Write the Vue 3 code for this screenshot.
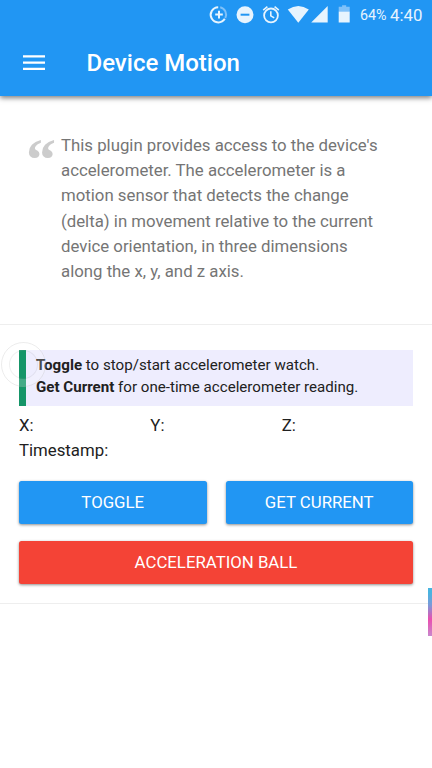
<script setup>
const axes = ['X', 'Y', 'Z']
</script>

<template>
  <div class="screen">
    <header class="top">
      <div class="status">
        <svg class="status-icons" width="156" height="30" viewBox="0 0 156 30">
          <g fill="none" stroke="#e7f4fe" stroke-width="2">
            <path d="M18.2 7.2A7.6 7.6 0 1 0 24.8 18.8" />
            <path d="M20.2 7.2A7.6 7.6 0 0 1 25.3 18" stroke="#7fc1f9" />
            <path d="M15.2 14.6h7.6M19 10.8v7.6" />
            <circle cx="71" cy="15.4" r="6.9" stroke-width="1.8" />
            <path d="M63.2 10.2l4.2-3.6M78.8 10.2l-4.2-3.6M70.8 11.3v4.6l3.4 2" stroke-width="1.6" />
          </g>
          <circle cx="45" cy="14.7" r="8.5" fill="#e7f4fe" />
          <path d="M40.6 14.7h8.8" stroke="#2196f3" stroke-width="2" />
          <path d="M87.8 9.4Q98.3 2.4 108.8 9.4L98.3 22.7Z" fill="#e7f4fe" />
          <path d="M127.7 6V22.5H111.2Z" fill="#e7f4fe" />
          <path d="M138.7 12V6.8h3.4V5.3h4.1v1.5h3.5V12Z" fill="#7fc1f9" />
          <path d="M138.7 11.7h11v10.8h-11Z" fill="#e7f4fe" />
        </svg>
        <span class="battery">64%</span>
        <span class="clock">4:40</span>
      </div>
      <div class="navbar">
        <svg class="menu" width="22" height="16" viewBox="0 0 22 16">
          <path d="M0 1.3h22M0 7.6h22M0 13.8h22" stroke="#fff" stroke-width="2.3" />
        </svg>
        <h1>Device Motion</h1>
      </div>
    </header>

    <section class="about">
      <span class="quote">“</span>
      <p>
        This plugin provides access to the device's<br>accelerometer. The accelerometer is a<br>motion
        sensor that detects the change<br>(delta) in movement relative to the current<br>device
        orientation, in three dimensions<br>along the x, y, and z axis.
      </p>
    </section>

    <section class="controls">
      <div class="note">
        <b>Toggle</b> to stop/start accelerometer watch.<br>
        <b>Get Current</b> for one-time accelerometer reading.
        <span class="touch"></span>
      </div>
      <div class="axes">
        <span v-for="axis in axes" :key="axis">{{ axis }}:</span>
      </div>
      <div class="timestamp">Timestamp:</div>
      <div class="actions">
        <button>TOGGLE</button>
        <button>GET CURRENT</button>
        <button class="wide">ACCELERATION BALL</button>
      </div>
    </section>
    <span class="edge"></span>
  </div>
</template>

<style>
body {
  background: #fff;
}
</style>

<style scoped>
.screen {
  position: relative;
  box-sizing: border-box;
  height: 768px;
  overflow: hidden;
  background: #fff;
  color: #212121;
  font: 16.8px/25.2px Roboto, sans-serif;
}

.top {
  height: 96px;
  background: #2196f3;
  color: #fff;
  box-shadow: 0 2px 5px rgba(0, 0, 0, 0.5);
}

.status {
  display: flex;
  height: 30px;
  padding-left: 200px;
  color: #e7f4fe;
  line-height: 30px;
}

.status-icons {
  flex: none;
}

.battery {
  width: 30px;
  padding-left: 4px;
  font-size: 14.3px;
}

.clock {
  font-size: 16.8px;
}

.navbar {
  display: flex;
  align-items: center;
  height: 66px;
  padding-left: 22.5px;
}

.menu {
  margin-right: 42px;
}

h1 {
  margin: 0;
  font-size: 24px;
  font-weight: 500;
  line-height: 32px;
}

.about {
  display: flex;
  box-sizing: border-box;
  height: 229px;
  padding: 37px 0 0 26px;
  border-bottom: 1px solid #eee;
  color: #757575;
}

.quote {
  width: 35px;
  margin-top: -4px;
  color: #ccc;
  font: bold 60px/62px "Liberation Serif", serif;
}

p {
  margin: 0;
  white-space: nowrap;
}

.controls {
  box-sizing: border-box;
  height: 279px;
  padding: 25px 19px 0;
  border-bottom: 1px solid #eee;
}

.note {
  position: relative;
  box-sizing: border-box;
  height: 56px;
  padding: 5px 0 0 10px;
  border-left: 7px solid #159568;
  background: #eeedfe;
  font-size: 15.12px;
  line-height: 21.6px;
  white-space: nowrap;
}

.touch {
  position: absolute;
  top: -8px;
  left: -25px;
  box-sizing: border-box;
  width: 45px;
  height: 45px;
  border: 8px solid rgba(255, 255, 255, 0.2);
  border-radius: 50%;
  outline: 1px solid rgba(150, 150, 150, 0.18);
  outline-offset: -1px;
  box-shadow: inset 0 0 0 1px rgba(150, 150, 150, 0.14);
}

.axes {
  display: grid;
  grid-template-columns: repeat(3, 1fr);
  padding-top: 7px;
}

.actions {
  display: grid;
  grid-template-columns: 1fr 1fr;
  gap: 17px 19px;
  padding-top: 18px;
}

button {
  height: 43px;
  padding: 0;
  border: 0;
  border-radius: 2.5px;
  background: #2196f3;
  box-shadow: 0 1px 3px rgba(0, 0, 0, 0.45);
  color: #fff;
  font: 16.8px/43px Roboto, sans-serif;
}

.wide {
  grid-column: 1 / 3;
  background: #f44336;
}

.edge {
  position: absolute;
  top: 588px;
  right: 0;
  width: 4px;
  height: 48px;
  background: linear-gradient(#48b4e0 10%, #7a9ad8 35%, #e94fb0 65%, #c987cc);
}
</style>
